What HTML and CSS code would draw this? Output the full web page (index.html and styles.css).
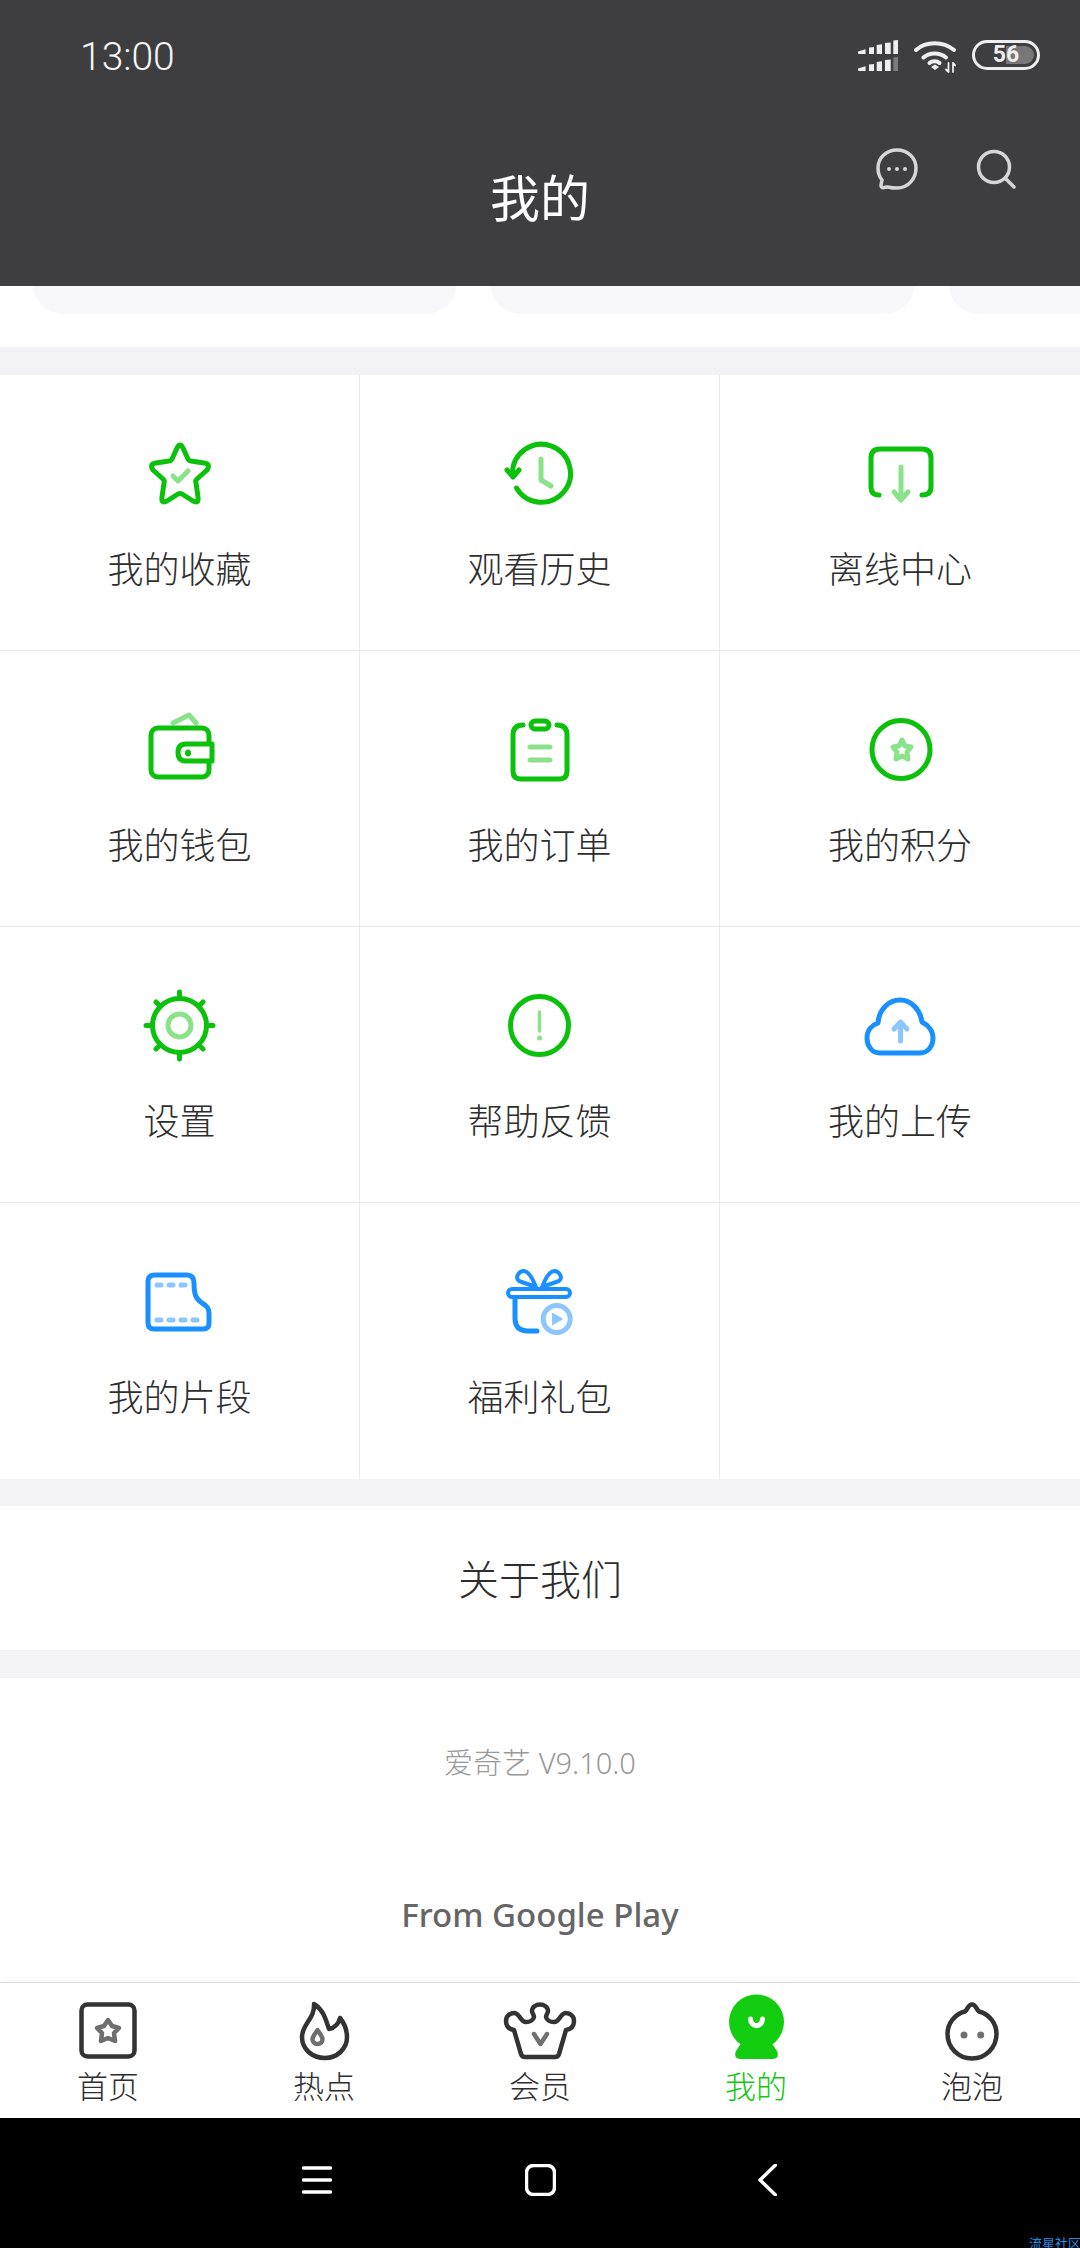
FILE: index.html
```html
<!DOCTYPE html>
<html lang="zh-CN">
<head>
  <meta charset="UTF-8" />
  <title>我的</title>
  <link rel="stylesheet" href="styles.css">
</head>
<body>
  <!-- 顶部状态栏 + 标题 -->
  <header class="header">
    <div class="status-bar">
      <span class="time">13:00</span>
      <div class="status-icons">
        <svg class="signal" width="40" height="31" viewBox="0 0 40 31">
          <path class="st-fill" d="M0 11.5 7.6 9.3V14H1a1 1 0 0 1-1-1ZM11 7.6 16 7v7h-5ZM18.7 5l5.3-.7V14h-5.3ZM27 3l5.700-.6V14H27ZM35.300 .6 40 0v14h-4.700Z"/>
          <path class="st-fill" d="M0 28.500 7.600 26.300V31H1a1 1 0 0 1-1-1ZM11 24.600 16 24v7h-5ZM18.700 22l5.300-.7V31h-5.300ZM27 20l5.700-.6V31H27Z"/>
          <path class="st-dim" d="M35.300 17.600 40 17v14h-4.700Z"/>
        </svg>
        <svg class="wifi" width="42" height="33" viewBox="0 0 42 33">
          <path class="st-line" d="M2 10C12 1 29 1 40 10M9.500 17.500C15 12 26 12 32 17.500"/>
          <path class="st-line" d="M15.500 23C18 20.500 23 20.500 25.500 23"/>
          <path class="st-fill" d="M21 24.500 25 27 21 30 17 27Z"/>
          <path class="st-thin" d="M34.500 23V32M32 29.500 34.500 32M39 23V32M39 23 41.500 25.500"/>
        </svg>
        <div class="battery"><div class="battery-level">56</div></div>
      </div>
    </div>
    <div class="title-bar">
      <span></span>
      <h1 class="page-title">我的</h1>
      <div class="title-actions">
        <svg class="msg-icon" width="44" height="44" viewBox="0 0 44 44">
          <path class="bar-line" d="M22 3C11 3 3 11 3 21C3 26 4.500 30 7 33L6 38C5.800 40 7 41 9 40.500C11 40 12 40 14 40.200C17 41 19 41 22 41C33 41 41 32 41 21C41 11 33 3 22 3Z"/>
          <circle class="bar-dot" cx="14" cy="22" r="2"/>
          <circle class="bar-dot" cx="22" cy="22" r="2"/>
          <circle class="bar-dot" cx="30" cy="22" r="2"/>
        </svg>
        <svg class="search-icon" width="40" height="40" viewBox="0 0 40 40">
          <circle class="bar-line" cx="18" cy="18" r="15.500"/>
          <path class="bar-line" d="M30 30 38 38"/>
        </svg>
      </div>
    </div>
  </header>

  <main class="content">
    <!-- 被标题栏盖住的卡片 -->
    <div class="card-strip">
      <div class="strip-card"></div>
      <div class="strip-card"></div>
      <div class="strip-card"></div>
    </div>

    <section class="menu-grid">
      <a class="menu-cell">
        <svg class="menu-icon" viewBox="0 0 80 80">
          <path class="ic-green" d="M37 15Q40 9 43 15L48 26Q49 28 51 28L64 30Q71 31 67 37L57 46Q55 48 56 50L58 64Q59 71 53 68L42 61Q40 60 38 61L27 68Q21 71 22 64L24 50Q25 48 23 46L13 37Q9 31 16 30L29 28Q31 28 32 26Z"/>
          <path class="ic-green-light" d="M33 43 38 48 48 38"/>
        </svg>
        <span class="menu-label">我的收藏</span>
      </a>
      <a class="menu-cell">
        <svg class="menu-icon" viewBox="0 0 80 80">
          <path class="ic-green" d="M16.500 55A29 29 0 1 0 12.500 40"/>
          <path class="ic-green" d="M7 37 13 44 19 37"/>
          <path class="ic-green-light" d="M41 26V47L51 53"/>
        </svg>
        <span class="menu-label">观看历史</span>
      </a>
      <a class="menu-cell">
        <svg class="menu-icon" viewBox="0 0 80 80">
          <path class="ic-green" d="M19 62Q11 62 11 54V25Q11 16 20 16H62Q71 16 71 25V54Q71 62 62 62"/>
          <path class="ic-green-light" d="M41 34V67M34 59 41 67 48 59"/>
        </svg>
        <span class="menu-label">离线中心</span>
      </a>

      <a class="menu-cell">
        <svg class="menu-icon" viewBox="0 0 80 80">
          <path class="ic-green-light" d="M33 14 49 6 56 14"/>
          <rect class="ic-green" x="11" y="19" width="58" height="49" rx="7"/>
          <path class="ic-green ic-white" d="M72 35H46Q38 35 38 43.500Q38 52 46 52H72Z"/>
          <ellipse class="ic-green-fill" cx="48" cy="44" rx="3" ry="3.500"/>
        </svg>
        <span class="menu-label">我的钱包</span>
      </a>
      <a class="menu-cell">
        <svg class="menu-icon" viewBox="0 0 80 80">
          <path class="ic-green" d="M23 16Q13 16 13 26V62Q13 70 21 70H59Q67 70 67 62V26Q67 16 57 16"/>
          <rect class="ic-green" x="31" y="12" width="18" height="8" rx="4"/>
          <path class="ic-green-light" d="M30 38H50M30 51H50"/>
        </svg>
        <span class="menu-label">我的订单</span>
      </a>
      <a class="menu-cell">
        <svg class="menu-icon" viewBox="0 0 80 80">
          <circle class="ic-green" cx="41" cy="40.500" r="29"/>
          <path class="ic-green-light" d="M42 31 45 37 51 38 47 43 48 50 42 47 36 50 37 43 33 38 39 37Z"/>
        </svg>
        <span class="menu-label">我的积分</span>
      </a>

      <a class="menu-cell">
        <svg class="menu-icon" viewBox="0 0 80 80">
          <circle class="ic-green" cx="39.500" cy="40.500" r="27"/>
          <path class="ic-green" d="M39.500 13V7M39.500 68V74M12 40.500H6M67 40.500H73M20 21 16 17M59 21 63 17M20 60 16 64M59 60 63 64"/>
          <circle class="ic-green-light" cx="39.500" cy="40.500" r="11.500"/>
        </svg>
        <span class="menu-label">设置</span>
      </a>
      <a class="menu-cell">
        <svg class="menu-icon" viewBox="0 0 80 80">
          <circle class="ic-green" cx="39.500" cy="40.500" r="29"/>
          <path class="ic-green-light ic-thin" d="M39.500 27V46"/>
          <circle class="ic-green-light-fill" cx="39.500" cy="53" r="2.500"/>
        </svg>
        <span class="menu-label">帮助反馈</span>
      </a>
      <a class="menu-cell">
        <svg class="menu-icon" viewBox="0 0 80 80">
          <path class="ic-blue" d="M20 68C11 68 7 60 7 53C7 45 12 40 18 38C19 24 29 15 40 15C51 15 60 24 62 37C68 40 73 46 73 53C73 61 68 68 60 68Z"/>
          <path class="ic-blue-light" d="M40.500 56V38M34 44 40.500 37 47 44"/>
        </svg>
        <span class="menu-label">我的上传</span>
      </a>

      <a class="menu-cell">
        <svg class="menu-icon" viewBox="0 0 80 80">
          <path class="ic-blue" d="M15 14H47Q54 14 54 22C54 34 56 38 62 42C67 45 69 47 69 53V62Q69 68 63 68H14Q8 68 8 62V20Q8 14 15 14Z"/>
          <path class="ic-blue-light" d="M17 24H21M29 24H33M41 24H45M17 59H21M29 59H33M41 59H45M53 59H57"/>
        </svg>
        <span class="menu-label">我的片段</span>
      </a>
      <a class="menu-cell">
        <svg class="menu-icon" viewBox="0 0 80 80">
          <path class="ic-blue ic-mid" d="M36 26C32 16 28 9 23 10C18 11 15 17 19 20ZM42 26C46 16 50 9 55 10C60 11 63 17 59 20Z"/>
          <rect class="ic-blue ic-mid" x="8" y="28" width="62" height="8" rx="4"/>
          <path class="ic-blue" d="M15 38V57Q15 70 28 70H37"/>
          <circle class="ic-blue-light" cx="56.700" cy="58" r="13.500"/>
          <path class="ic-blue-light-fill" d="M52 52.500Q52 51.500 53 52L62.500 57.500Q63.500 58 62.500 58.500L53 64Q52 64.500 52 63.500Z"/>
        </svg>
        <span class="menu-label">福利礼包</span>
      </a>
      <div class="menu-cell"></div>
    </section>

    <a class="about-row">关于我们</a>

    <section class="about-info">
      <p class="version">爱奇艺 V9.10.0</p>
      <p class="channel">From Google Play</p>
    </section>
  </main>

  <!-- 底部导航 -->
  <nav class="tab-bar">
    <a class="tab">
      <svg class="tab-icon" viewBox="0 0 80 70">
        <rect class="tab-line" x="13.500" y="9.500" width="53" height="52" rx="6"/>
        <path class="tab-soft" d="M40 25 44 31 51 33 46 38 47 46 40 43 33 46 34 38 29 33 36 31Z"/>
      </svg>
      <span class="tab-label">首页</span>
    </a>
    <a class="tab">
      <svg class="tab-icon" viewBox="0 0 80 70">
        <path class="tab-line" d="M30 9C40 15 42 26 45 34C51 33 55 28 56 23C60 28 63 35 63 42C63 54 53 63 41 63C28 63 18 54 18 42C18 29 31 24 30 9Z"/>
        <path class="tab-soft" d="M33.500 35C30 40 28.500 42 28.500 44A5 5 0 0 0 38.500 44C38.500 42 37 40 33.500 35Z"/>
      </svg>
      <span class="tab-label">热点</span>
    </a>
    <a class="tab">
      <svg class="tab-icon" viewBox="0 0 80 70">
        <path class="tab-line" d="M25 62H55Q58 62 59 59L66 35C72 34 74 30 74 26C74 21 70 18 66 18C60 18 60 27 54 27C50 27 46.500 25 46 22C46 20 48 18 48 16C48 12 44 9.500 40 9.500C36 9.500 32 12 32 16C32 18 34 20 34 22C33.500 25 30 27 26 27C20 27 20 18 14 18C10 18 6 21 6 26C6 30 8 34 14 35L21 59Q22 62 25 62Z"/>
        <path class="tab-soft" d="M34 39 40.500 49 47 39"/>
      </svg>
      <span class="tab-label">会员</span>
    </a>
    <a class="tab tab-active">
      <svg class="tab-icon" viewBox="0 0 80 70">
        <circle class="tab-green" cx="40.500" cy="27" r="27.500"/>
        <path class="tab-green" d="M28 44 20 56Q17 64 25 64H56Q64 64 61 56L53 44Z"/>
        <path class="tab-smile" d="M34.500 24C35 33 46 33 46.500 24"/>
      </svg>
      <span class="tab-label">我的</span>
    </a>
    <a class="tab">
      <svg class="tab-icon" viewBox="0 0 80 70">
        <path class="tab-line" d="M33 16.500C36 14 36 9.500 40 9.500C44 9.500 44 14 47 16.500C57 19 64.500 28 64.500 39A24.500 24.500 0 0 1 15.500 39C15.500 28 23 19 33 16.500Z"/>
        <circle class="tab-eye" cx="32" cy="40" r="3.500"/>
        <circle class="tab-eye" cx="48.700" cy="40" r="3.500"/>
      </svg>
      <span class="tab-label">泡泡</span>
    </a>
  </nav>

  <!-- 系统导航条 -->
  <div class="system-bar">
    <svg width="30" height="32" viewBox="0 0 30 32">
      <path class="sys-line" d="M1.500 4H28.500M1.500 16H28.500M1.500 28H28.500"/>
    </svg>
    <svg width="31" height="32" viewBox="0 0 31 32">
      <rect class="sys-line" x="1.500" y="1.500" width="28" height="29" rx="7"/>
    </svg>
    <svg class="sys-back" width="19" height="32" viewBox="0 0 19 32">
      <path class="sys-line" d="M17.500 1 2 16 17.500 31"/>
    </svg>
    <span class="watermark">流星社区</span>
  </div>
</body>
</html>
```

FILE: styles.css
```css
* {
  box-sizing: border-box;
}

html,
body {
  margin: 0;
  padding: 0;
}

body {
  width: 1080px;
  height: 2248px;
  display: flex;
  flex-direction: column;
  overflow: hidden;
  background-color: #fff;
  color: #333;
  font-family: "Noto Sans CJK SC", "Noto Sans", sans-serif;
}

/* 顶部 */
.header {
  height: 286px;
  flex-shrink: 0;
  background-color: #3e3e40;
  display: flex;
  flex-direction: column;
}

.status-bar {
  height: 114px;
  padding: 40px 40px 0 80px;
  display: flex;
  justify-content: space-between;
  align-items: flex-start;
}

.time {
  font-family: Roboto, sans-serif;
  font-size: 39px;
  font-weight: 300;
  line-height: 34px;
  color: #f6f6f6;
}

.status-icons {
  display: flex;
  align-items: flex-start;
}

.signal {
  margin-right: 16px;
}

.wifi {
  margin-right: 16px;
}

.st-fill {
  fill: #eee;
}

.st-dim {
  fill: #7b7b7b;
}

.st-line,
.st-thin {
  fill: none;
  stroke: #eee;
  stroke-width: 4;
  stroke-linecap: round;
}

.st-thin {
  stroke-width: 1.8;
}

.battery {
  width: 68px;
  height: 30px;
  padding: 3px;
  border: 3px solid #eee;
  border-radius: 15px;
}

.battery-level {
  height: 100%;
  border-radius: 9px;
  background: linear-gradient(to right, transparent 50%, #777 50%);
  font-family: Roboto, sans-serif;
  font-size: 23px;
  font-weight: 700;
  line-height: 18px;
  text-align: center;
  color: #eee;
}

.title-bar {
  flex: 1;
  display: grid;
  grid-template-columns: 1fr auto 1fr;
}

.page-title {
  margin: 0;
  padding-top: 49px;
  font-size: 50px;
  font-weight: 400;
  line-height: 64px;
  color: #fff;
}

.title-actions {
  padding: 33px 64px 0 0;
  display: flex;
  justify-content: flex-end;
  align-items: flex-start;
  gap: 57px;
}

.search-icon {
  margin-top: 2px;
}

.bar-line {
  fill: none;
  stroke: #d6d6d6;
  stroke-width: 3.5;
  stroke-linecap: round;
}

.bar-dot {
  fill: #d6d6d6;
}

/* 内容 */
.content {
  flex: 1;
  display: flex;
  flex-direction: column;
  background-color: #f3f3f5;
}

.card-strip {
  height: 61px;
  padding-left: 33px;
  display: flex;
  gap: 35px;
  overflow: hidden;
  background-color: #fff;
  margin-bottom: 28px;
}

.strip-card {
  width: 423px;
  height: 28px;
  flex-shrink: 0;
  background-color: #f8f8fa;
  border-radius: 0 0 30px 30px / 0 0 28px 28px;
}

.menu-grid {
  display: grid;
  grid-template-columns: repeat(3, 360px);
  grid-auto-rows: 276px;
  background-color: #fff;
}

.menu-cell {
  padding-top: 58px;
  display: flex;
  flex-direction: column;
  align-items: center;
  border-right: 1px solid #e9e9e9;
  border-bottom: 1px solid #e9e9e9;
}

.menu-cell:nth-child(3n) {
  border-right: none;
}

.menu-cell:nth-last-child(-n+3) {
  border-bottom: none;
}

.menu-icon {
  width: 80px;
  height: 80px;
}

.menu-label {
  margin-top: 29px;
  font-size: 36px;
  font-weight: 300;
  line-height: 50px;
  color: #2e2e2e;
}

.ic-green,
.ic-green-light,
.ic-blue,
.ic-blue-light {
  fill: none;
  stroke-width: 5;
  stroke-linecap: round;
  stroke-linejoin: round;
}

.ic-green {
  stroke: #0cc10c;
}

.ic-green-light {
  stroke: #8ae38a;
}

.ic-blue {
  stroke: #1a90ff;
}

.ic-blue-light {
  stroke: #8cc6ff;
}

.ic-white {
  fill: #fff;
}

.ic-thin {
  stroke-width: 3.5;
}

.ic-mid {
  stroke-width: 4;
}

.ic-green-fill {
  fill: #0cc10c;
}

.ic-green-light-fill {
  fill: #8ae38a;
}

.ic-blue-light-fill {
  fill: #8cc6ff;
}

.about-row {
  height: 144px;
  margin-top: 27px;
  padding-bottom: 2px;
  display: flex;
  justify-content: center;
  align-items: center;
  background-color: #fff;
  font-size: 41px;
  font-weight: 300;
  color: #2e2e2e;
}

.about-info {
  flex: 1;
  margin-top: 28px;
  padding-top: 65px;
  background-color: #fff;
  text-align: center;
}

.version {
  margin: 0;
  font-family: "Noto Sans", "Noto Sans CJK SC", sans-serif;
  font-size: 29px;
  font-weight: 300;
  line-height: 40px;
  color: #999;
}

.channel {
  margin: 107px 0 0;
  font-family: "Noto Sans", sans-serif;
  font-size: 33px;
  font-weight: 500;
  line-height: 50px;
  color: #666;
}

/* 底部导航 */
.tab-bar {
  height: 136px;
  flex-shrink: 0;
  display: grid;
  grid-template-columns: repeat(5, 216px);
  padding-top: 12px;
  background-color: #fff;
  border-top: 1px solid #ddd;
  box-shadow: 0 -6px 14px rgba(0, 0, 0, 0.02);
}

.tab {
  display: flex;
  flex-direction: column;
  align-items: center;
}

.tab-icon {
  width: 80px;
  height: 70px;
  overflow: visible;
}

.tab-label {
  font-size: 31px;
  font-weight: 300;
  line-height: 40px;
  color: #2e2e2e;
}

.tab-active .tab-label {
  color: #12c70f;
}

.tab-line,
.tab-soft {
  fill: none;
  stroke: #333;
  stroke-width: 4.5;
  stroke-linejoin: round;
  stroke-linecap: round;
}

.tab-soft {
  stroke: #6f6f6f;
}

.tab-eye {
  fill: #6f6f6f;
}

.tab-green {
  fill: #12cd10;
}

.tab-smile {
  fill: none;
  stroke: #fff;
  stroke-width: 5;
  stroke-linecap: round;
}

/* 系统导航条 */
.system-bar {
  position: relative;
  height: 130px;
  flex-shrink: 0;
  padding: 46px 0 0 302px;
  display: flex;
  align-items: flex-start;
  gap: 193px;
  background-color: #000;
}

.sys-back {
  margin-left: 9px;
}

.sys-line {
  fill: none;
  stroke: #fff;
  stroke-width: 3.5;
  stroke-linecap: round;
  stroke-linejoin: round;
}

.watermark {
  position: absolute;
  left: 1029px;
  bottom: -1px;
  font-size: 13px;
  line-height: 13px;
  white-space: nowrap;
  color: #1e90e6;
}
```
